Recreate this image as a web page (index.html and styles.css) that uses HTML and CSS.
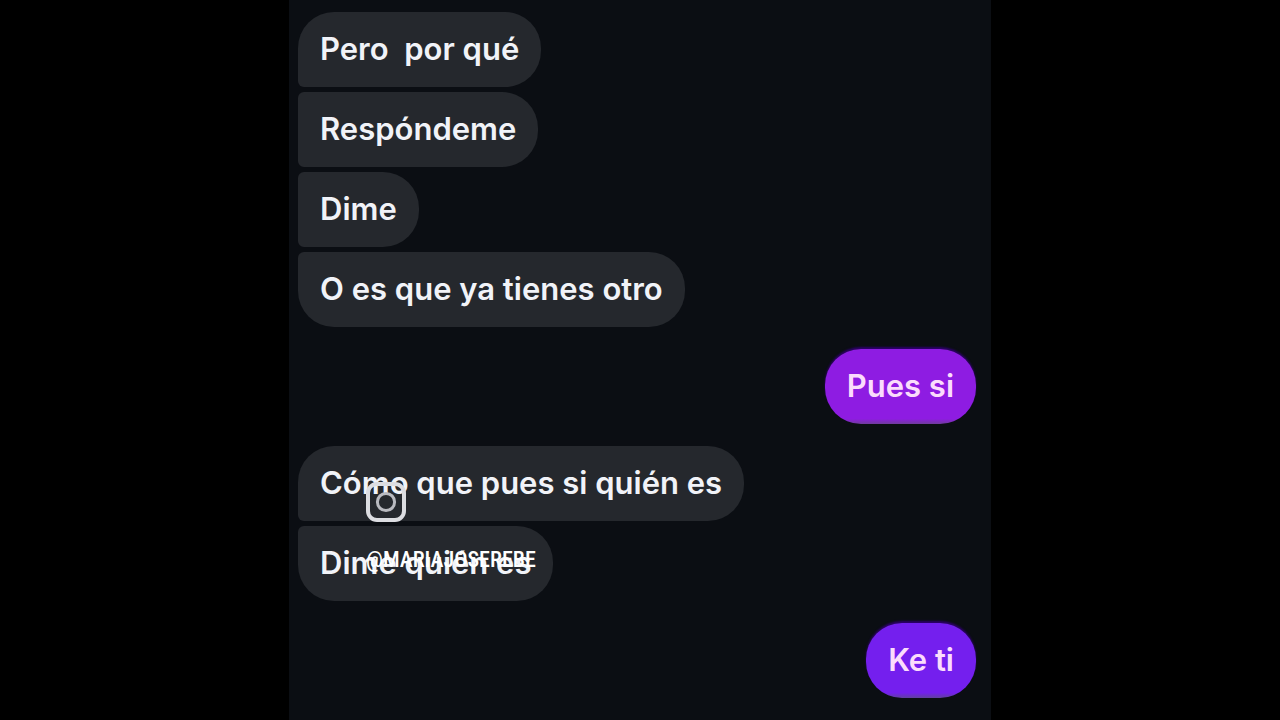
FILE: index.html
```html
<!DOCTYPE html>
<html lang="es">
<head>
<meta charset="utf-8">
<meta name="viewport" content="width=device-width, initial-scale=1">
<title>Chat</title>
<link rel="stylesheet" href="styles.css">
</head>
<body>
<main class="chat">
  <section class="group">
    <p class="bubble received first">Pero  por qué</p>
    <p class="bubble received middle">Respóndeme</p>
    <p class="bubble received middle">Dime</p>
    <p class="bubble received last">O es que ya tienes otro</p>
  </section>
  <section class="group own">
    <p class="bubble sent">Pues si</p>
  </section>
  <section class="group">
    <p class="bubble received first">Cómo que pues si quién es</p>
    <p class="bubble received last">Dime quién es</p>
    <div class="credit">
      <svg class="logo" viewBox="0 0 40 40" role="img" aria-label="Instagram">
        <rect x="2" y="2" width="36" height="36" rx="9" fill="none" stroke="#dcdde1" stroke-width="4"/>
        <circle cx="20" cy="20" r="8.6" fill="none" stroke="#b9bac0" stroke-width="3"/>
      </svg>
      <span class="handle">@MARIAJOSEREBE</span>
    </div>
  </section>
  <section class="group own">
    <p class="bubble sent violet">Ke ti</p>
  </section>
</main>
</body>
</html>
```
FILE: styles.css
```css
* {
  box-sizing: border-box;
}

body {
  margin: 0;
  background: #000;
  font-family: Inter, "Liberation Sans", sans-serif;
}

.chat {
  display: flex;
  flex-direction: column;
  gap: 22px;
  max-width: 702px;
  min-height: 100vh;
  margin: 0 auto;
  padding: 12px 15px 22px 9px;
  background: #0b0e13;
}

.group {
  position: relative;
  display: flex;
  flex-direction: column;
  align-items: flex-start;
  gap: 5px;
}

.own {
  align-items: flex-end;
}

.bubble {
  margin: 0;
  padding: 17px 22px 18px;
  border-radius: 36px;
  font-size: 31px;
  font-weight: 600;
  line-height: 40px;
  white-space: pre-wrap;
}

.received {
  background: #25282d;
  color: #f1f3f8;
}

.first {
  border-bottom-left-radius: 6px;
}

.middle {
  border-top-left-radius: 6px;
  border-bottom-left-radius: 6px;
}

.last {
  border-top-left-radius: 6px;
}

.sent {
  background: linear-gradient(#8e1ce2 93%, #703c9c);
  box-shadow: 0 -2px 2px #2c0069;
  color: #fbdcfc;
}

.violet {
  background: linear-gradient(#741fee 93%, #61409f);
}

.credit {
  position: absolute;
  top: 36px;
  left: 68px;
  display: flex;
  flex-direction: column;
  gap: 24px;
}

.logo {
  width: 40px;
  height: 40px;
}

.handle {
  color: #fff;
  font-family: "Roboto Condensed", "Liberation Sans Narrow", Roboto, sans-serif;
  font-size: 22px;
  font-weight: 500;
  line-height: 28px;
}
```
